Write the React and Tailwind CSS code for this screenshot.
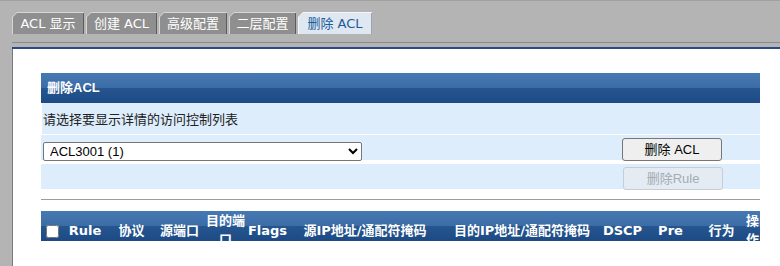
import React from 'react';

const tabs = [
  { label: 'ACL 显示', w: 'w-[72px]' },
  { label: '创建 ACL', w: 'w-[71px]' },
  { label: '高级配置', w: 'w-[68px]' },
  { label: '二层配置', w: 'w-[67px]' },
  { label: '删除 ACL', w: 'w-[74px]', active: true },
];

const columns = [
  { key: 'chk', w: 21 },
  { key: 'Rule', w: 46 },
  { key: '协议', w: 47 },
  { key: '源端口', w: 49 },
  { key: '目的端口', w: 43 },
  { key: 'Flags', w: 41 },
  { key: '源IP地址/通配符掩码', w: 154 },
  { key: '目的IP地址/通配符掩码', w: 160 },
  { key: 'DSCP', w: 41 },
  { key: 'Pre', w: 55 },
  { key: '行为', w: 47 },
  { key: '操作', w: 15 },
];

function Tab({ label, w, active }) {
  return (
    <div className={`${w} h-[22px] [clip-path:polygon(5px_0,100%_0,100%_100%,0_100%,0_5px)] ${active ? 'bg-[#f4f7fb]' : 'bg-[#d6d6d6]'} pl-px pt-px`}>
      <div
        className={`h-full flex items-center justify-center [clip-path:polygon(4px_0,100%_0,100%_100%,0_100%,0_4px)] border-r ${
          active
            ? 'bg-[#dfe7f1] text-[#1b5c9c] border-[#9aa5b1]'
            : 'bg-[#8f8f8f] text-white border-[#5c5c5c]'
        } text-[13px] font-['DejaVu_Sans','Noto_Sans_CJK_SC',sans-serif]`}
      >
        {label}
      </div>
    </div>
  );
}

export default function App() {
  return (
    <div className="w-[780px] h-[266px] overflow-hidden bg-[#b4b4b4] border-t border-[#a0a0a0] flex flex-col">
      {/* Tabs */}
      <div className="flex items-end gap-[2px] pl-[12px] pt-[11px] shrink-0">
        {tabs.map((t) => (
          <Tab key={t.label} {...t} />
        ))}
      </div>

      {/* Rules under tabs */}
      <div className="ml-[12px] mt-[8px] h-px bg-[#8a8a8a] shrink-0" />
      <div className="ml-[12px] mt-[4px] h-[2px] bg-[#2c4a8a] shrink-0" />

      {/* Content */}
      <div className="ml-[12px] flex-1 bg-white border-l border-[#7a7a7a] pl-[28px] pr-[20px] pt-[24px]">
        {/* Panel */}
        <div className="h-[30px] flex items-center pl-[6px] bg-[linear-gradient(to_bottom,#4679b2_0%,#3c6ca6_50%,#26568f_50%,#1d4a84_100%)] text-white text-[13px] font-bold font-['Liberation_Sans','Noto_Sans_CJK_SC',sans-serif]">
          删除ACL
        </div>
        <div className="h-[31px] ml-px flex items-center pl-[1px] bg-[#ddedfc] text-[13px] text-[#222] font-['Noto_Sans_CJK_SC',sans-serif]">
          请选择要显示详情的访问控制列表
        </div>
        <div className="mt-px h-[25px] bg-[#ddedfc] grid grid-cols-[579px_1fr] items-center">
          <div className="pl-[2px] pt-[3px]">
            <select className="w-[319px] h-[19px] bg-white border border-[#767676] rounded-[2px] text-[13px] text-black pl-[2px] font-['Liberation_Sans',sans-serif]">
              <option>ACL3001 (1)</option>
            </select>
          </div>
          <div className="pl-[2px]">
            <button className="w-[100px] h-[23px] bg-[#efefef] border border-[#767676] rounded-[3px] text-[13px] text-black font-['Liberation_Sans','Noto_Sans_CJK_SC',sans-serif]">
              删除 ACL
            </button>
          </div>
        </div>
        <div className="mt-[4px] h-[25px] bg-[#ddedfc] grid grid-cols-[579px_1fr] items-center">
          <div />
          <div className="pl-[3px] pt-px">
            <button
              disabled
              className="w-[100px] h-[23px] bg-[#e4ebf2] border border-[#c4ced8] rounded-[3px] text-[13px] text-[#a3abb3] font-['Liberation_Sans','Noto_Sans_CJK_SC',sans-serif]"
            >
              删除Rule
            </button>
          </div>
        </div>

        <div className="mt-[10px] h-px bg-[#9c9c9c]" />

        {/* Table header, clipped like the original */}
        <div className="mt-[11px] h-[30px] overflow-hidden bg-[linear-gradient(to_bottom,#4679b2_0%,#3c6ca6_50%,#26568f_50%,#1d4a84_100%)]">
          <table className="table-fixed border-collapse w-[719px] text-white text-[13px] font-bold leading-[19px] font-['DejaVu_Sans','Noto_Sans_CJK_SC',sans-serif]">
            <colgroup>
              {columns.map((c) => (
                <col key={c.key} style={{ width: c.w }} />
              ))}
            </colgroup>
            <thead>
              <tr className="h-[38px]">
                {columns.map((c) =>
                  c.key === 'chk' ? (
                    <th key={c.key} className="p-0 pl-[5px] align-middle text-left">
                      <input type="checkbox" className="w-[13px] h-[13px] align-middle" />
                    </th>
                  ) : (
                    <th key={c.key} className="p-0 align-middle text-center font-bold">
                      {c.key}
                    </th>
                  )
                )}
              </tr>
            </thead>
          </table>
        </div>
      </div>
    </div>
  );
}
